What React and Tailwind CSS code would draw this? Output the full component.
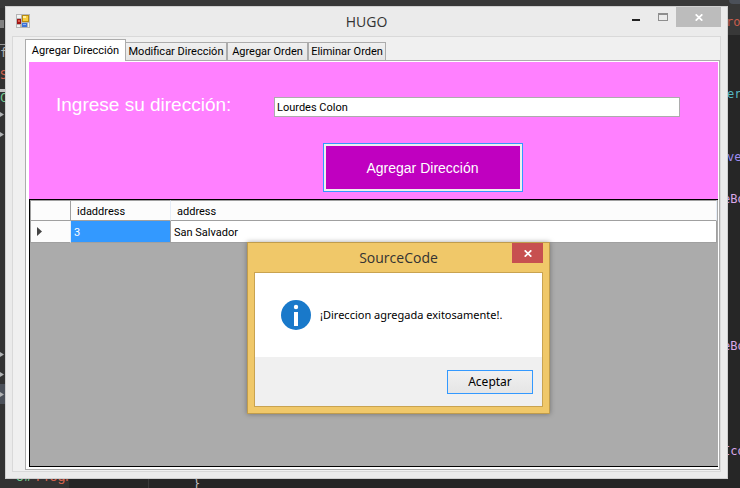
import React from "react";

const codeLines = [
  { text: "er", style: "text-[#56b6c2] pl-1" },
  null,
  null,
  { text: "ve", style: "text-[#9d8cf0] pl-1" },
  null,
  { text: "eBo", style: "text-[#d9a8e8]" },
  null,
  null,
  null,
  null,
  null,
  null,
  { text: "eBo", style: "text-[#d9a8e8]" },
  null,
  null,
  null,
  null,
  { text: "Ico", style: "text-[#d9a8e8]" },
];

const treeRows = [true, true, false, false, false, false, false, false, false, false, false, false, true, true, true];

function Arrow() {
  return (
    <svg width="4" height="5" viewBox="0 0 4 5" className="block">
      <path d="M0 0L4 2.5L0 5Z" fill="#afb1b3" />
    </svg>
  );
}

function Editor() {
  return (
    <div
      aria-hidden="true"
      className="absolute inset-0 flex flex-col overflow-hidden bg-[#262626] font-['DejaVu_Sans_Mono',monospace] text-xs whitespace-nowrap"
    >
      <div className="flex h-2 shrink-0 justify-end bg-[#383838]">
        <div className="h-1 w-[11px] rounded-bl-sm bg-[#4b5059]" />
      </div>
      <div className="flex min-h-0 grow">
        <div className="flex w-[69px] shrink-0 flex-col overflow-hidden bg-[#323232]">
          <div className="mt-3 h-2 w-1 shrink-0 bg-[#808080]" />
          <div className="mt-4 h-px w-2 shrink-0 bg-[#999]" />
          <div className="flex h-[15px] shrink-0 items-center text-[#afb1b3]">f</div>
          <div className="flex h-[29px] shrink-0 items-center text-[#d1614d]">So</div>
          <div className="h-[3px] w-2 shrink-0 bg-[#c0c0c0]" />
          <div className="flex h-3 shrink-0 items-center text-[#73c991]">C</div>
          {treeRows.map((shown, i) => (
            <div key={i} className={"flex h-5 shrink-0 items-center " + (i === 14 ? "bg-[#4b5059]" : "")}>
              {shown && <Arrow />}
            </div>
          ))}
          <div className="mt-[61px] flex h-[22px] shrink-0 items-center gap-1 pl-4 font-['Roboto',sans-serif] text-sm">
            <span className="text-[#73c991]">c#</span>
            <span className="text-[#d1614d]">Progr</span>
          </div>
        </div>
        <div className="flex min-w-0 grow flex-col">
          <div className="flex h-[27px] w-full shrink-0 items-center justify-end bg-[#383838]">
            <span className="w-[14px] text-[#c75d4d]">roc</span>
          </div>
          <div className="flex min-h-0 grow justify-between">
            <div className="flex items-end gap-[44px] pl-[79px]">
              <div className="h-full w-px bg-[#3a3a3a]" />
              <div className="h-3 text-[#c0c0c0]">{"}"}</div>
            </div>
            <div className="w-[17px] pt-[48px]">
              {codeLines.map((line, i) => (
                <div key={i} className={"flex h-[21px] items-center " + (line ? line.style : "")}>
                  {line ? line.text : ""}
                </div>
              ))}
            </div>
          </div>
        </div>
      </div>
    </div>
  );
}

function AppIcon() {
  return (
    <svg width="14" height="14" viewBox="0 0 14 14" shapeRendering="crispEdges">
      <rect width="14" height="14" fill="#b5b5b5" />
      <rect x="1" y="1" width="4" height="3" fill="#f2f2f2" />
      <rect x="1" y="11" width="3" height="2" fill="#f2f2f2" />
      <rect x="12" y="9" width="1" height="4" fill="#f2f2f2" />
      <rect x="1" y="5" width="4" height="5" fill="#a01616" />
      <rect x="2" y="6" width="2" height="2" fill="#e05a4a" />
      <rect x="6" y="1" width="7" height="7" fill="#b88a10" />
      <rect x="7" y="2" width="5" height="5" fill="#f7cd3e" />
      <rect x="7" y="2" width="3" height="2" fill="#fff0a0" />
      <rect x="6" y="9" width="5" height="4" fill="#3d72d8" />
      <rect x="7" y="10" width="3" height="1" fill="#8fb4f5" />
    </svg>
  );
}

function CloseGlyph() {
  return (
    <svg width="8" height="7" viewBox="0 0 8 7">
      <path d="M0.7 0.3L7.3 6.7M7.3 0.3L0.7 6.7" stroke="#fff" strokeWidth="1.7" />
    </svg>
  );
}

function TitleBar() {
  return (
    <header className="flex h-[29px] items-start">
      <div className="w-[105px] pt-[7px] pl-[10px]">
        <AppIcon />
      </div>
      <h1 className="grow pt-1 text-center font-['Open_Sans',sans-serif] text-sm leading-[22px] text-[#333]">HUGO</h1>
      <div className="flex h-5 pr-[6px]">
        <button aria-label="Minimizar" className="flex w-[27px] items-center justify-center pt-[6px]">
          <span className="h-[2px] w-2 bg-[#222]" />
        </button>
        <button aria-label="Maximizar" className="flex w-[27px] items-center justify-center">
          <span className="h-2 w-[10px] border border-t-2 border-[#8e8e8e]" />
        </button>
        <button aria-label="Cerrar" className="flex w-[45px] items-center justify-center bg-[#bcbcbc]">
          <CloseGlyph />
        </button>
      </div>
    </header>
  );
}

const tabs = [
  { label: "Modificar Dirección", style: "w-[101px] border-l-0" },
  { label: "Agregar Orden", style: "w-[81px]" },
  { label: "Eliminar Orden", style: "w-[78px]" },
];

function Tabs() {
  return (
    <div role="tablist" className="flex h-[21px] items-end text-[11px] whitespace-nowrap text-black">
      <button
        role="tab"
        aria-selected="true"
        className="relative z-10 -mb-px flex h-[22px] w-[101px] items-start justify-center border border-b-0 border-[#acacac] bg-white pt-[2px] leading-[17px]"
      >
        Agregar Dirección
      </button>
      {tabs.map((tab) => (
        <button
          key={tab.label}
          role="tab"
          aria-selected="false"
          className={
            "flex h-[18px] items-center justify-center border border-b-0 border-[#acacac] bg-linear-to-b from-[#f0f0f0] to-[#e5e5e5] pt-px " +
            tab.style
          }
        >
          {tab.label}
        </button>
      ))}
    </div>
  );
}

function AddressForm() {
  return (
    <form className="h-[137px] bg-[#ff80ff] pr-[38px] pl-[27px]" onSubmit={(e) => e.preventDefault()}>
      <div className="flex items-center pt-[35px]">
        <label htmlFor="direccion" className="-mt-1 w-[218px] shrink-0 font-['Liberation_Sans',sans-serif] text-[19px] leading-5 text-white">
          Ingrese su dirección:
        </label>
        <input
          id="direccion"
          type="text"
          defaultValue="Lourdes Colon"
          className="h-5 min-w-0 grow border border-[#acacac] bg-white px-[2px] text-[11px] text-black outline-none"
        />
      </div>
      <div className="flex justify-center pt-[26px] pl-[109px]">
        <button className="h-[49px] w-[200px] border border-[#3399ff] bg-[#efefef] p-[2px]">
          <span className="flex h-full items-center justify-center bg-[#c000c0] font-['Liberation_Sans',sans-serif] text-sm text-white">
            Agregar Dirección
          </span>
        </button>
      </div>
    </form>
  );
}

function AddressGrid() {
  return (
    <div className="grow border border-r-0 border-black bg-[#ababab] pr-px">
      <table className="w-full table-fixed border-separate border-spacing-0 text-left text-[11px] leading-4 text-black">
        <thead>
          <tr className="h-[21px] bg-[#fcfcfc]">
            <th className="w-[41px] border border-[#a0a0a0]" />
            <th className="w-[100px] border-y border-r border-y-[#a0a0a0] border-r-[#e5edf7] pt-[2px] pl-[6px] font-normal">idaddress</th>
            <th className="border-y border-r border-y-[#a0a0a0] border-r-[#e5edf7] pt-[2px] pl-[6px] font-normal">address</th>
          </tr>
        </thead>
        <tbody>
          <tr className="h-[22px]">
            <td className="border-x border-b border-[#a0a0a0] border-r-[#e5edf7] bg-[#fcfcfc] pl-[6px]">
              <svg width="5" height="9" viewBox="0 0 5 9" className="block">
                <path d="M0 0L5 4.5L0 9Z" fill="#444" />
              </svg>
            </td>
            <td className="border-r border-b border-[#a0a0a0] bg-[#3399ff] pt-[2px] pl-[3px] text-white">3</td>
            <td className="border-r border-b border-[#a0a0a0] bg-white pt-[2px] pl-[3px]">San Salvador</td>
          </tr>
        </tbody>
      </table>
    </div>
  );
}

function MessageBox() {
  return (
    <section
      role="dialog"
      aria-labelledby="message-title"
      className="absolute top-[242px] left-[247px] z-20 flex w-[303px] flex-col border border-[#c09c4c] bg-[#f0c869] px-[6px] pb-[6px] shadow-[0_0_5px_rgba(0,0,0,0.35)]"
    >
      <header className="flex h-[29px] items-start">
        <h2 id="message-title" className="grow pt-1 pl-[31px] text-center font-['Open_Sans',sans-serif] text-sm leading-[22px] text-[#333]">
          SourceCode
        </h2>
        <button aria-label="Cerrar" className="flex h-5 w-[31px] items-center justify-center bg-[#c75050]">
          <CloseGlyph />
        </button>
      </header>
      <div className="border border-[#c9a350] bg-white font-['Noto_Sans',sans-serif] text-[11px] text-black">
        <div className="flex h-[84px] items-center gap-[9px] pl-[26px]">
          <svg width="30" height="30" viewBox="0 0 30 30" className="block">
            <circle cx="15" cy="15" r="15" fill="#1979ca" />
            <circle cx="15" cy="7" r="2.2" fill="#fff" />
            <rect x="13" y="12" width="4" height="14" fill="#fff" />
          </svg>
          <p>¡Direccion agregada exitosamente!.</p>
        </div>
        <div className="flex h-[49px] items-start justify-end bg-[#f0f0f0] pt-[13px] pr-[9px]">
          <button className="h-6 w-[86px] border border-[#3399ff] bg-linear-to-b from-[#f0f0f0] to-[#e5e5e5] text-xs">Aceptar</button>
        </div>
      </div>
    </section>
  );
}

export default function App() {
  return (
    <div className="relative flex min-h-screen flex-col pt-[6px] pr-[12px] pb-[9px] pl-[5px] font-['Roboto','Noto_Sans',sans-serif]">
      <Editor />
      <main className="relative flex grow flex-col border border-[#cfcfcf] bg-[#ebebeb]">
        <TitleBar />
        <div className="mx-[6px] mb-[6px] flex grow flex-col border border-[#d9d9d9] bg-[#f0f0f0] pt-[2px] pb-px pl-[12px]">
          <Tabs />
          <div className="flex grow flex-col border border-[#acacac] bg-white pt-px pr-px pb-[2px] pl-[3px]">
            <AddressForm />
            <AddressGrid />
          </div>
        </div>
      </main>
      <MessageBox />
    </div>
  );
}
